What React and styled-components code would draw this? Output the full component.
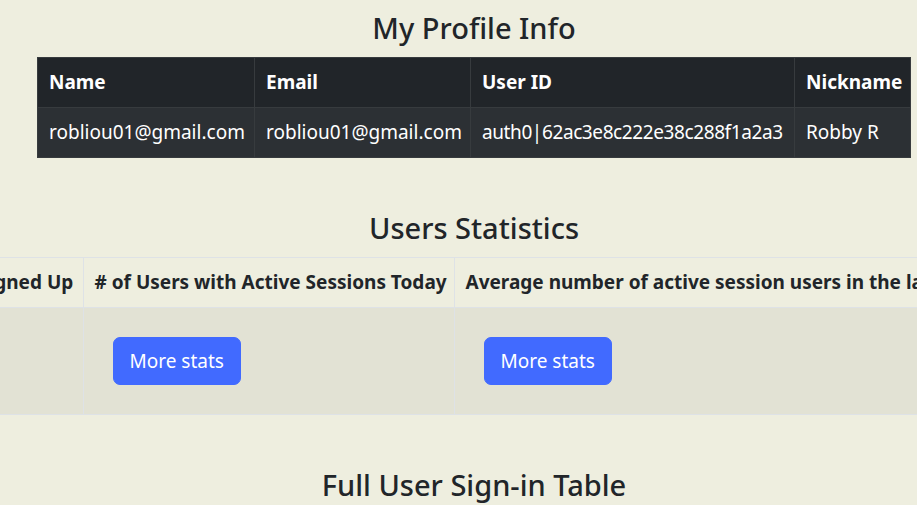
import React from 'react';
import styled, { createGlobalStyle } from 'styled-components';

const GlobalStyle = createGlobalStyle`
  html, body {
    margin: 0;
    overflow: hidden;
  }
  body {
    background-color: #eeeedf;
    color: #212529;
    font-family: "Noto Sans", "Open Sans", sans-serif;
  }
`;

const Page = styled.div`
  display: flex;
  flex-direction: column;
  align-items: center;
  width: 948px;
  padding-top: 11px;
`;

const Section = styled.section`
  display: flex;
  flex-direction: column;
  align-items: center;
  width: 100%;
  margin-bottom: 53px;
`;

const Title = styled.h3`
  margin: 0 0 12px;
  font-size: 29px;
  font-weight: 500;
  line-height: 34px;
  text-align: center;
`;

const TableRow = styled.div`
  display: flex;
  justify-content: center;
  width: 100%;
`;

const Table = styled.table`
  width: ${(p) => p.$width}px;
  border-collapse: collapse;
  flex-shrink: 0;
  table-layout: fixed;
  font-size: 19px;
  line-height: 25px;
  color: ${(p) => (p.$dark ? '#ffffff' : '#212529')};

  th, td {
    box-sizing: border-box;
    padding: 12px 12px 12px 11px;
    text-align: left;
    white-space: nowrap;
    overflow: hidden;
    border: 1px solid ${(p) => (p.$dark ? '#373b3e' : '#dee2e6')};
  }

  th {
    font-weight: 700;
  }

  thead tr {
    background-color: ${(p) => (p.$dark ? '#212529' : 'transparent')};
  }

  tbody tr {
    background-color: ${(p) => (p.$dark ? '#2c3034' : '#e2e2d4')};
  }
`;

const Col = styled.col`
  width: ${(p) => p.$w}px;
`;

const Cell = styled.td`
  letter-spacing: ${(p) => (p.$tight ? '-0.4px' : 'normal')};
`;

const Button = styled.button`
  margin: 17px 18px;
  padding: 8px 16px;
  border: 1px solid #416aff;
  border-radius: 7px;
  background-color: #416aff;
  color: #ffffff;
  font-family: inherit;
  font-size: 19px;
  line-height: 30px;
  cursor: pointer;
`;

const profileCols = [217, 216, 324, 116];
const statsCols = [216, 371, 627];
const sum = (cols) => cols.reduce((a, b) => a + b, 0);

const profile = {
  name: 'robliou01@gmail.com',
  email: 'robliou01@gmail.com',
  id: 'auth0|62ac3e8c222e38c288f1a2a3',
  nickname: 'Robby R',
};

const App = () => {
  return (
    <>
      <GlobalStyle />
      <Page>
        <Section>
          <Title>My Profile Info</Title>
          <TableRow>
            <Table $dark $width={sum(profileCols)}>
              <colgroup>
                {profileCols.map((w, i) => (
                  <Col key={i} $w={w} />
                ))}
              </colgroup>
              <thead>
                <tr>
                  <th>Name</th>
                  <th>Email</th>
                  <th>User ID</th>
                  <th>Nickname</th>
                </tr>
              </thead>
              <tbody>
                <tr>
                  <Cell>{profile.name}</Cell>
                  <Cell>{profile.email}</Cell>
                  <Cell $tight>{profile.id}</Cell>
                  <Cell>{profile.nickname}</Cell>
                </tr>
              </tbody>
            </Table>
          </TableRow>
        </Section>

        <Section>
          <Title>Users Statistics</Title>
          <TableRow>
            <Table $width={sum(statsCols)}>
              <colgroup>
                {statsCols.map((w, i) => (
                  <Col key={i} $w={w} />
                ))}
              </colgroup>
              <thead>
                <tr>
                  <th># of Users Signed Up</th>
                  <th># of Users with Active Sessions Today</th>
                  <th>Average number of active session users in the last 7 days</th>
                </tr>
              </thead>
              <tbody>
                <tr>
                  <Cell />
                  <Cell>
                    <Button>More stats</Button>
                  </Cell>
                  <Cell>
                    <Button>More stats</Button>
                  </Cell>
                </tr>
              </tbody>
            </Table>
          </TableRow>
        </Section>

        <Section>
          <Title>Full User Sign-in Table</Title>
        </Section>
      </Page>
    </>
  );
};

export default App;
